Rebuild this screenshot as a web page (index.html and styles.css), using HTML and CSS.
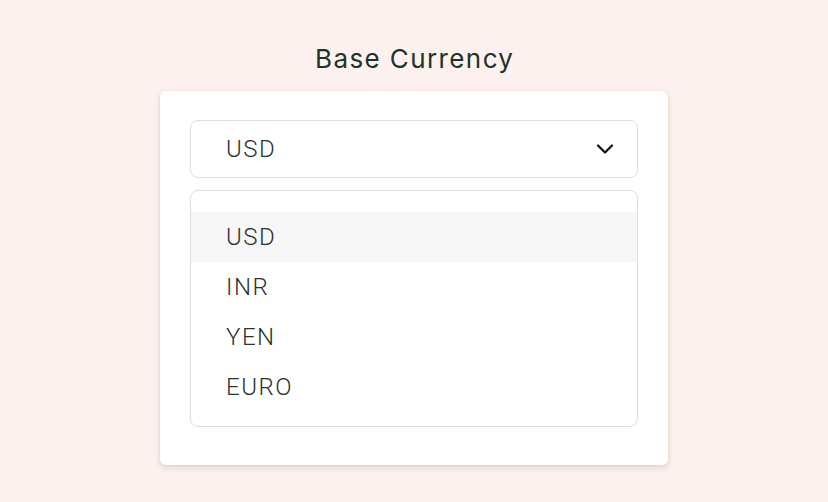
FILE: index.html
```html
<!DOCTYPE html>
<html lang="en">
<head>
<meta charset="utf-8">
<title>Base Currency</title>
<link rel="stylesheet" href="styles.css">
</head>
<body>
<main class="page">
  <h1 class="title">Base Currency</h1>
  <section class="card">
    <div class="select">
      <span class="select-value">USD</span>
      <svg class="chevron" width="18" height="10" viewBox="0 0 18 10" aria-hidden="true">
        <path d="M2 1.5 L9 8.5 L16 1.5" fill="none" stroke="#111" stroke-width="2.2" stroke-linecap="round" stroke-linejoin="round"/>
      </svg>
    </div>
    <ul class="options">
      <li class="option option-active">USD</li>
      <li class="option">INR</li>
      <li class="option">YEN</li>
      <li class="option">EURO</li>
    </ul>
  </section>
</main>
</body>
</html>
```

FILE: styles.css
```css
* { box-sizing: border-box; }

html, body {
  margin: 0;
  padding: 0;
}

body {
  background: #fdf1ef;
  width: 828px;
  height: 502px;
  overflow: hidden;
}

.page {
  display: flex;
  flex-direction: column;
  align-items: center;
  padding-top: 44px;
}

.title {
  margin: 0 0 17px;
  padding-left: 1.4px;
  font-family: "Inter", "Noto Sans", sans-serif;
  font-weight: 400;
  font-size: 26px;
  line-height: 30px;
  color: #1e3328;
  letter-spacing: 1.4px;
}

.card {
  width: 508px;
  height: 374px;
  background: #ffffff;
  border-radius: 6px;
  padding: 29px 30px 38px;
  box-shadow: 0 3px 6px rgba(120, 80, 70, 0.18), 0 0 3px rgba(120, 80, 70, 0.08);
  display: flex;
  flex-direction: column;
  gap: 12px;
}

.select {
  height: 58px;
  border: 1.5px solid #dedede;
  border-radius: 8px;
  display: flex;
  align-items: center;
  justify-content: space-between;
  padding: 0 23px 0 35px;
  font-family: "Roboto", "Liberation Sans", sans-serif;
  font-weight: 300;
  font-size: 24px;
  letter-spacing: 1.5px;
  color: #2b3230;
}

.select-value {
  line-height: 28px;
}

.chevron {
  display: block;
}

.options {
  list-style: none;
  margin: 0;
  height: 237px;
  border: 1.5px solid #dedede;
  border-radius: 8px;
  padding: 20.5px 0 14px;
  font-family: "Roboto", "Liberation Sans", sans-serif;
  font-weight: 300;
  font-size: 24px;
  letter-spacing: 1.5px;
  color: #2b3230;
}

.option {
  height: 50px;
  line-height: 50px;
  padding-left: 35px;
}

.option-active {
  background: #f6f6f6;
}
```
